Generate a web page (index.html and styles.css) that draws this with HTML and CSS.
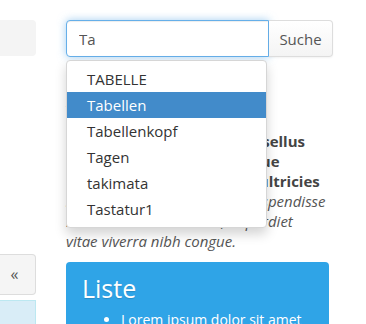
FILE: index.html
```html
<!DOCTYPE html>
<html>
<head>
	<meta charset="utf-8">
	<title>Suche</title>
	<link rel="stylesheet" href="styles.css">
</head>
<body>
	<div class="page">
		<aside class="sidebar">
			<div class="side-search"></div>
			<button class="side-toggle">&laquo;</button>
			<div class="side-info"></div>
		</aside>
		<main class="content">
			<div class="search">
				<div class="search-group">
					<input type="text" class="search-input" value="Ta">
					<button class="search-btn">Suche</button>
				</div>
				<ul class="suggest">
					<li>TABELLE</li>
					<li class="active">Tabellen</li>
					<li>Tabellenkopf</li>
					<li>Tagen</li>
					<li>takimata</li>
					<li>Tastatur1</li>
				</ul>
			</div>
			<h3 class="para-title">Absatz</h3>
			<p class="para">
				<strong>Lorem ipsum dolor sit Phasellus<br>
				pretium nisl eget dui congue<br>
				eleifend lacus vel tempor ultricies</strong><br>
				<em>sed dolor molestie nisl elit. Suspendisse<br>
				molestie nisl sed massa, imperdiet<br>
				vitae viverra nibh congue.</em>
			</p>
			<div class="box">
				<h2>Liste</h2>
				<ul>
					<li>Lorem ipsum dolor sit amet</li>
					<li>Consectetur adipiscing</li>
				</ul>
			</div>
		</main>
	</div>
</body>
</html>
```

FILE: styles.css
```css
body {
	margin: 0;
	font-family: "Open Sans", "Liberation Sans", sans-serif;
	font-size: 15px;
	line-height: 20px;
	color: #555;
	background: #fff;
	overflow: hidden;
}

.page {
	display: flex;
	gap: 30px;
	padding-top: 20px;
}

/* left column, cut off by the window */
.sidebar {
	width: 36px;
	flex: none;
	display: flex;
	flex-direction: column;
}

.side-search {
	height: 36px;
	background: #f4f4f4;
	border-radius: 0 4px 4px 0;
}

.side-toggle {
	margin-top: 198px;
	height: 41px;
	border: 1px solid #ddd;
	border-left: none;
	border-radius: 0 4px 4px 0;
	background: #f5f5f5;
	color: #555;
	font-family: "Open Sans", sans-serif;
	font-size: 16px;
	line-height: 20px;
	padding: 0 6px 2px 0;
	text-align: center;
}

.side-info {
	margin-top: 5px;
	height: 40px;
	background: #d9edf7;
	border: 1px solid #bce8f1;
	border-left: none;
}

.content {
	width: 267px;
	flex: none;
}

.search {
	position: relative;
}

.search-group {
	display: flex;
	height: 37px;
}

.search-input {
	flex: 1;
	min-width: 0;
	box-sizing: border-box;
	height: 37px;
	margin: 0;
	padding: 0 12px;
	border: 1px solid #66afe9;
	border-radius: 4px 0 0 4px;
	box-shadow: inset 0 1px 1px rgba(0,0,0,.075), 0 0 8px rgba(102,175,233,.6);
	outline: none;
	font-family: "Open Sans", sans-serif;
	font-size: 15px;
	color: #555;
}

.search-btn {
	width: 64px;
	height: 37px;
	margin: 0;
	padding: 0;
	border: 1px solid #ddd;
	border-left: none;
	border-radius: 0 4px 4px 0;
	background: linear-gradient(#fff, #f4f4f4);
	box-shadow: 0 1px 2px rgba(0,0,0,.05);
	font-family: "Open Sans", sans-serif;
	font-size: 15px;
	color: #555;
}

.suggest {
	position: absolute;
	top: 40px;
	left: 0;
	width: 199px;
	margin: 0;
	padding: 5px 0;
	list-style: none;
	background: #fff;
	border: 1px solid #d6d6d6;
	border-radius: 4px;
	box-shadow: 0 6px 12px rgba(0,0,0,.175);
	z-index: 10;
}

.suggest li {
	height: 26px;
	line-height: 26px;
	padding-left: 20px;
	font-size: 15px;
	color: #333;
}

.suggest li.active {
	background: #428bca;
	color: #fff;
}

.para-title {
	margin: 28px 0 0;
	font-size: 18px;
	line-height: 30px;
	font-weight: 600;
	color: #317eac;
}

.para {
	margin: 16px 0 11px;
	white-space: nowrap;
}

.para strong {
	color: #444;
}

.box {
	background: #2fa4e7;
	border-radius: 4px;
	margin-right: 4px;
	padding: 12px 16px 10px;
	color: #fff;
}

.box h2 {
	margin: 0 0 8px;
	font-size: 25px;
	line-height: 28px;
	font-weight: 500;
	text-shadow: 0 1px 1px rgba(0,0,0,.15);
}

.box ul {
	margin: 0;
	padding-left: 39px;
	font-size: 14px;
	white-space: nowrap;
}
```
